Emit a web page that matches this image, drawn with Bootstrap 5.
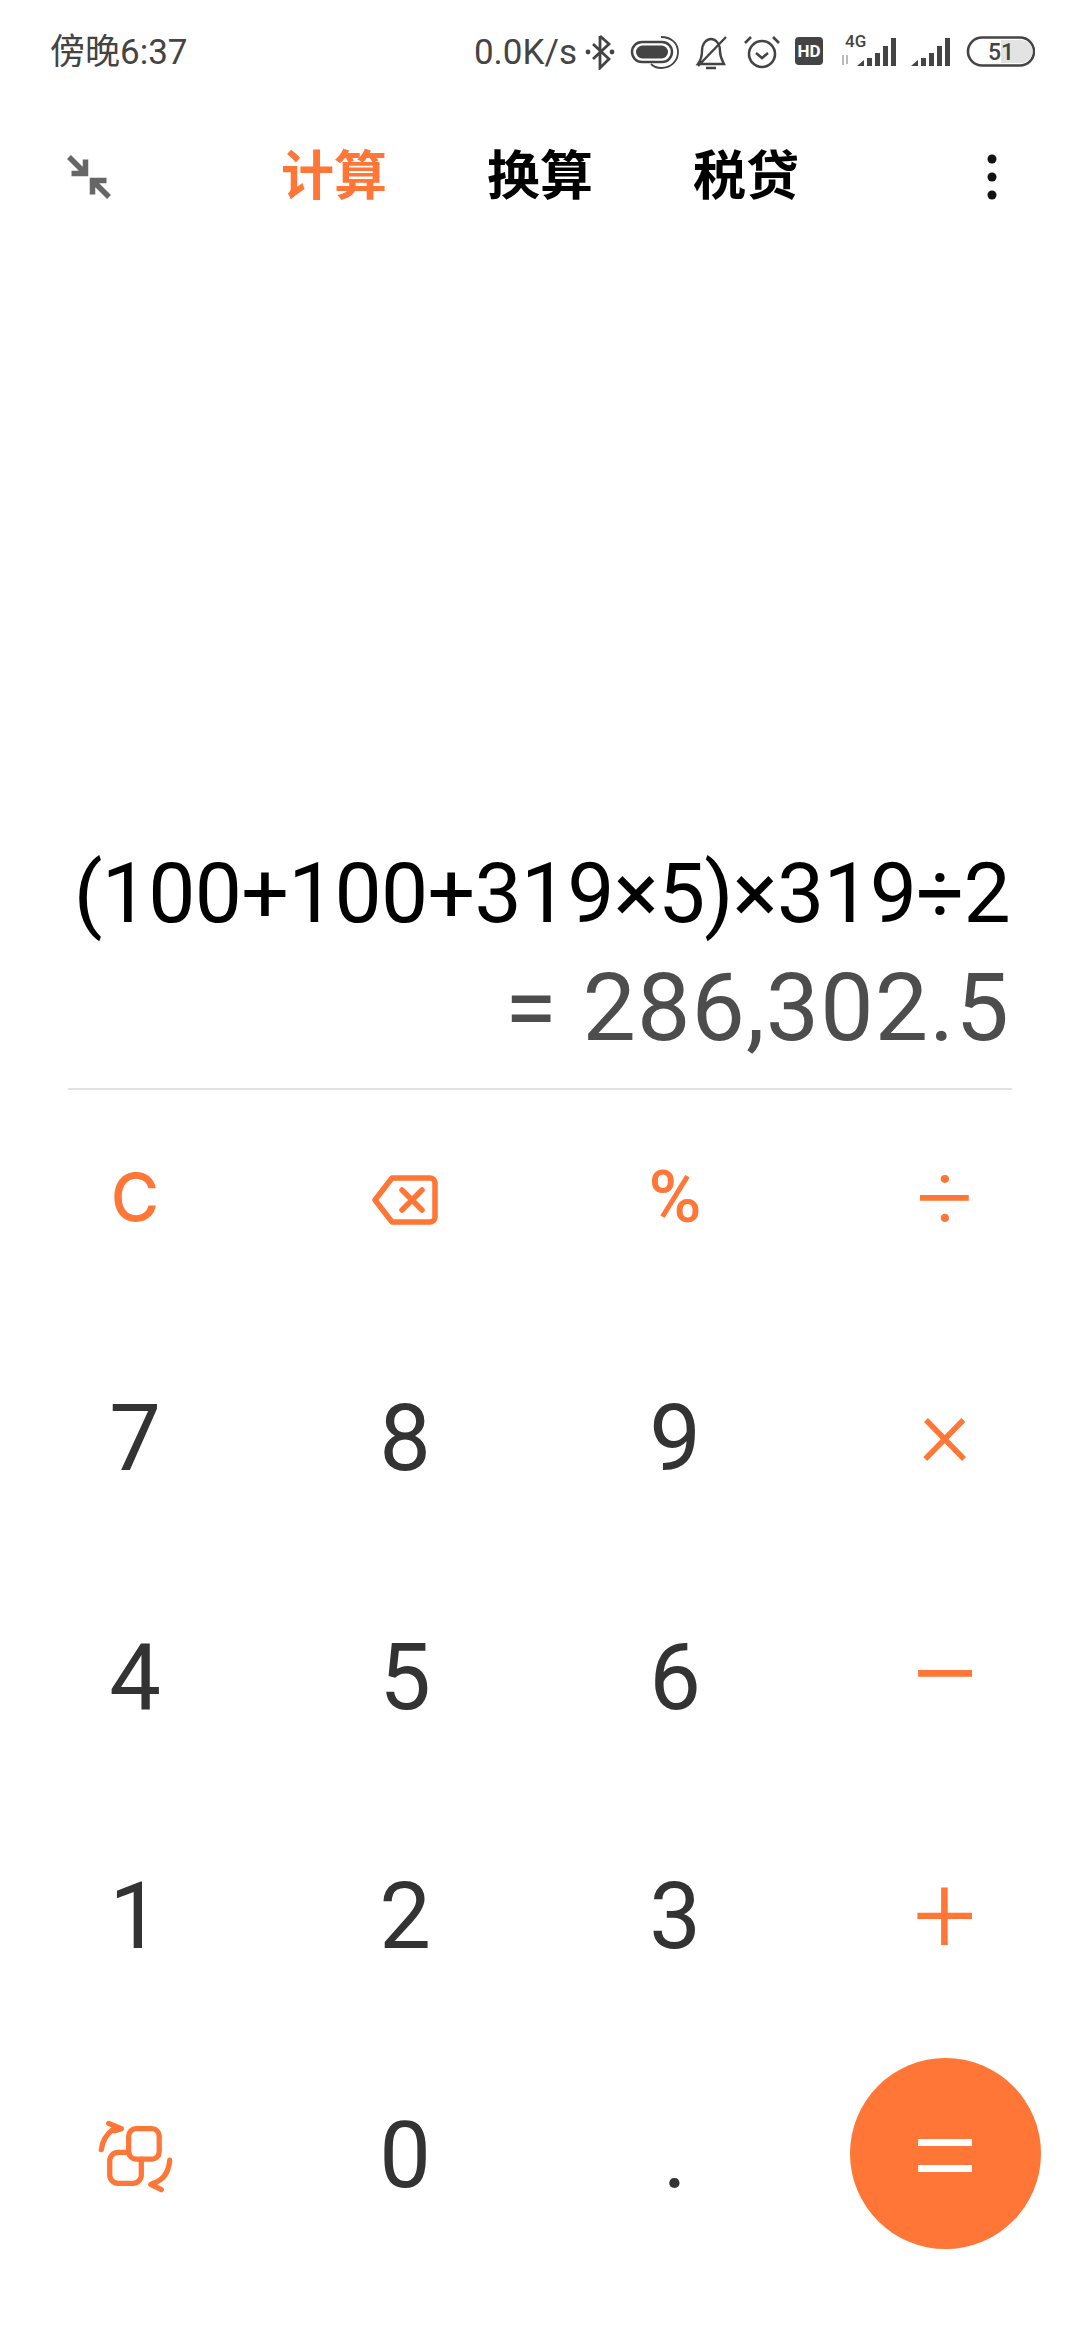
<!DOCTYPE html>
<html lang="zh-CN">
<head>
  <meta charset="UTF-8">
  <title>计算器</title>
  <meta name="viewport" content="width=device-width, initial-scale=1">
  <link href="https://cdn.jsdelivr.net/npm/bootstrap@5.3.2/dist/css/bootstrap.min.css" rel="stylesheet">
  <style>
    body { background: #fff; font-family: Roboto, "Noto Sans CJK SC", sans-serif; }
    .calc-screen { width: 1080px; height: 2340px; }
    .status-strip { height: 102px; padding: 2px 45px 0 50px; color: #444; font-size: 35px; line-height: 1.4; }
    .status-icons text { font-family: Roboto, sans-serif; fill: #444; }
    .tab-strip { height: 150px; padding: 0 67px; }
    .tab-side { flex: 1 1 0; }
    .tab-names { gap: 100px; font-size: 53px; font-weight: 700; color: #000; line-height: 1; }
    .tab-active { color: #ff7636; }
    .expr-line { font-size: 84px; line-height: 100px; color: #000; letter-spacing: -.75px; padding-right: 70px; }
    .result-line { font-size: 95px; line-height: 112px; color: #4d4d4d; letter-spacing: 1.1px; padding-right: 70px; margin-top: 8px; }
    .display-rule { height: 2px; background: #e2e2e2; margin: 24px 68px 0 68px; }
    .key-pad { margin-top: -12px; padding-bottom: 67px; }
    .key-cell { height: 239px; padding-top: 4px; font-size: 92px; color: #333; }
    .key-op { color: #ff7636; font-size: 100px; font-weight: 300; padding-top: 0; }
    .key-times { padding-bottom: 10px; }
    .key-plus { font-size: 112px; }
    .key-minus { font-size: 132px; }
    .key-fn { font-size: 72px; font-weight: 500; }
    .key-clear { font-family: Inter, sans-serif; font-size: 66px; }
    .key-equals-cell { padding-top: 0; }
    .key-equals { width: 191px; height: 191px; border-radius: 50%; background: #ff7636; color: #fff; font-size: 132px; font-weight: 300; }
  </style>
</head>
<body>
  <div class="calc-screen d-flex flex-column">

    <!-- status bar -->
    <div class="status-strip d-flex justify-content-between align-items-center">
      <span>傍晚6:37</span>
      <div class="d-flex align-items-center gap-2">
        <span class="text-nowrap">0.0K/s</span>
        <svg class="status-icons flex-shrink-0" width="450" height="36" viewBox="0 0 450 36" fill="none" stroke="#444" stroke-width="3">
          <!-- bluetooth -->
          <path d="M15 2v32l9-9-16-15M15 2l9 8-16 15" stroke-width="2.8"/>
          <circle cx="3" cy="18" r="2.400" fill="#444" stroke="none"/><circle cx="27" cy="18" r="2.400" fill="#444" stroke="none"/>
          <!-- pill toggle -->
          <rect x="47" y="8" width="40" height="20" rx="10" stroke-width="2.400"/>
          <rect x="51" y="11.500" width="32" height="13" rx="6.500" fill="#444" stroke="none"/>
          <path d="M76 3c10 0 17 6 17 15s-7 16-17 16c-4 0-7-1-10-4" stroke-width="1.800"/>
          <!-- muted bell -->
          <path d="M113 30c3-4 4-7 4-13 0-7 4-12 9-12s9 5 9 12c0 6 2 9 4 13zM113 32L141 3M121 34h10" stroke-width="2.400"/>
          <!-- alarm -->
          <circle cx="177" cy="20" r="13" stroke-width="2.600"/>
          <path d="M171 19l6 5 6-5M160 9l6-6M194 9l-6-6" stroke-width="2.600"/>
          <!-- HD -->
          <rect x="210" y="3" width="28" height="28" rx="4" fill="#444" stroke="none"/>
          <text x="224" y="23" font-size="17" font-weight="700" text-anchor="middle" style="fill:#fff" stroke="none">HD</text>
          <!-- 4G signal -->
          <text x="260" y="13" font-size="17" font-weight="500" stroke="none">4G</text>
          <path d="M258 21v10M262 30V21" stroke="#aaa" stroke-width="1.600"/>
          <path d="M272 32l7-6v6zM282 24h5v8h-5zM290 19h5v13h-5zM298 12h5v20h-5zM306 4h5v28h-5z" fill="#444" stroke="none"/>
          <!-- second signal -->
          <path d="M326 32l7-6v6zM336 24h5v8h-5zM344 19h5v13h-5zM352 12h5v20h-5zM360 4h5v28h-5z" fill="#444" stroke="none"/>
          <!-- battery -->
          <rect x="383" y="3.500" width="66" height="28" rx="14" stroke-width="2.600"/>
          <path d="M416 6h20a11.500 11.500 0 0 1 0 23h-20z" fill="#e3e3e3" stroke="none"/>
          <text x="416" y="25.500" font-size="23" font-weight="500" text-anchor="middle" stroke="none">51</text>
        </svg>
      </div>
    </div>

    <!-- tabs -->
    <div class="tab-strip d-flex align-items-center">
      <div class="tab-side d-flex">
        <svg width="44" height="44" viewBox="0 0 44 44" fill="none" stroke="#666" stroke-width="5.500">
          <path d="M2 2l15 15M4.500 18.500h14v-14M42 42L27 27M39.500 25.500h-14v14"/>
        </svg>
      </div>
      <div class="tab-names d-flex">
        <span class="tab-active">计算</span>
        <span>换算</span>
        <span>税贷</span>
      </div>
      <div class="tab-side d-flex justify-content-end">
        <svg width="42" height="46" viewBox="0 0 42 46" fill="#111">
          <circle cx="21" cy="5" r="4.500"/><circle cx="21" cy="23" r="4.500"/><circle cx="21" cy="41" r="4.500"/>
        </svg>
      </div>
    </div>

    <!-- display -->
    <div class="flex-grow-1 d-flex flex-column justify-content-end text-end">
      <div class="expr-line">(100+100+319×5)×319÷2</div>
      <div class="result-line">= 286,302.5</div>
      <div class="display-rule"></div>
    </div>

    <!-- keys -->
    <div class="key-pad">
      <div class="row g-0">
        <div class="col-3 key-cell key-op key-fn key-clear d-flex align-items-center justify-content-center">C</div>
        <div class="col-3 key-cell d-flex align-items-center justify-content-center">
          <svg width="66" height="50" viewBox="0 0 66 50" fill="none" stroke="#ff7636" stroke-width="5.500" stroke-linejoin="round" stroke-linecap="round">
            <path d="M20 3h38a5 5 0 0 1 5 5v34a5 5 0 0 1-5 5H20L3 25z"/>
            <path d="M30 15l20 20M50 15L30 35"/>
          </svg>
        </div>
        <div class="col-3 key-cell key-op key-fn d-flex align-items-center justify-content-center">%</div>
        <div class="col-3 key-cell key-op d-flex align-items-center justify-content-center">÷</div>
      </div>
      <div class="row g-0">
        <div class="col-3 key-cell d-flex align-items-center justify-content-center">7</div>
        <div class="col-3 key-cell d-flex align-items-center justify-content-center">8</div>
        <div class="col-3 key-cell d-flex align-items-center justify-content-center">9</div>
        <div class="col-3 key-cell key-op key-times d-flex align-items-center justify-content-center">×</div>
      </div>
      <div class="row g-0">
        <div class="col-3 key-cell d-flex align-items-center justify-content-center">4</div>
        <div class="col-3 key-cell d-flex align-items-center justify-content-center">5</div>
        <div class="col-3 key-cell d-flex align-items-center justify-content-center">6</div>
        <div class="col-3 key-cell key-op key-minus d-flex align-items-center justify-content-center">−</div>
      </div>
      <div class="row g-0">
        <div class="col-3 key-cell d-flex align-items-center justify-content-center">1</div>
        <div class="col-3 key-cell d-flex align-items-center justify-content-center">2</div>
        <div class="col-3 key-cell d-flex align-items-center justify-content-center">3</div>
        <div class="col-3 key-cell key-op key-plus d-flex align-items-center justify-content-center">+</div>
      </div>
      <div class="row g-0">
        <div class="col-3 key-cell d-flex align-items-center justify-content-center">
          <svg width="80" height="74" viewBox="0 0 76 70" fill="none" stroke="#ff7636" stroke-width="5" stroke-linecap="round" stroke-linejoin="round">
            <rect x="32" y="9" width="29" height="29" rx="7"/>
            <path d="M32 31.500H22a8 8 0 0 0-8 8V53a8 8 0 0 0 8 8h14a8 8 0 0 0 8-8V38"/>
            <path d="M6 29C7 20 11 14 18 9M13 4l12 5-6 2"/>
            <path d="M71 39C70 50 65 58 55 61M63 67l-10-5 5-2"/>
          </svg>
        </div>
        <div class="col-3 key-cell d-flex align-items-center justify-content-center">0</div>
        <div class="col-3 key-cell d-flex align-items-center justify-content-center">.</div>
        <div class="col-3 key-cell key-equals-cell d-flex align-items-center justify-content-center">
          <div class="key-equals d-flex align-items-center justify-content-center">=</div>
        </div>
      </div>
    </div>
  </div>
  <script src="https://cdn.jsdelivr.net/npm/bootstrap@5.3.2/dist/js/bootstrap.bundle.min.js"></script>
</body>
</html>
